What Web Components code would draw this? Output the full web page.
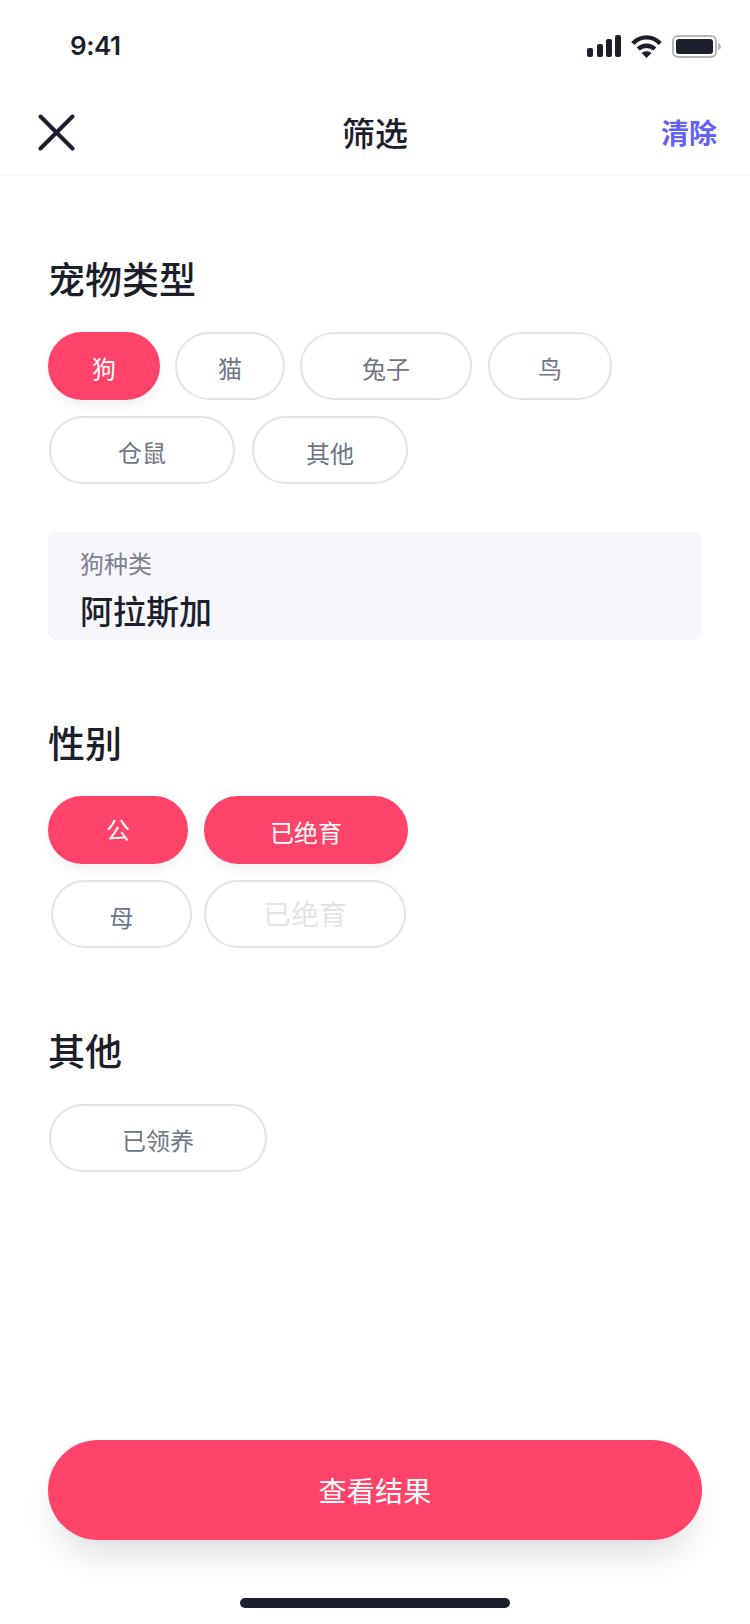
<!DOCTYPE html>
<html lang="zh">
<head>
<meta charset="utf-8">
<title>筛选</title>
<style>
  html, body { margin: 0; background: #fff; }
  body {
    width: 750px;
    height: 1624px;
    overflow: hidden;
    display: flex;
    flex-direction: column;
    font-family: "Noto Sans CJK SC", "Noto Sans", sans-serif;
    color: #1c1e2c;
  }
  filter-main { flex: 1; }
</style>
</head>
<body>
  <status-bar></status-bar>
  <nav-bar heading="筛选" action="清除"></nav-bar>

  <filter-main>
    <filter-section heading="宠物类型" top="77">
      <chip-row wrap>
        <filter-chip width="112" selected shift="3">狗</filter-chip>
        <filter-chip width="110" shift="3">猫</filter-chip>
        <filter-chip width="172" shift="3">兔子</filter-chip>
        <filter-chip width="124" shift="3" inset="1">鸟</filter-chip>
        <filter-chip width="186" shift="3" inset="1">仓鼠</filter-chip>
        <filter-chip width="156" shift="4" inset="2">其他</filter-chip>
      </chip-row>
      <field-box label="狗种类" value="阿拉斯加"></field-box>
    </filter-section>

    <filter-section heading="性别" top="77">
      <chip-row>
        <filter-chip width="140" selected shift="-4">公</filter-chip>
        <filter-chip width="204" selected shift="3">已绝育</filter-chip>
      </chip-row>
      <chip-row inset="3">
        <filter-chip width="141" shift="4">母</filter-chip>
        <filter-chip width="202" disabled shift="-2" inset="-4">已绝育</filter-chip>
      </chip-row>
    </filter-section>

    <filter-section heading="其他" top="77">
      <chip-row inset="1">
        <filter-chip width="218" shift="3">已领养</filter-chip>
      </chip-row>
    </filter-section>
  </filter-main>

  <primary-button>查看结果</primary-button>
  <home-indicator></home-indicator>

<script>
class StatusBar extends HTMLElement {
  constructor() {
    super();
    this.attachShadow({ mode: "open" });
    this.shadowRoot.innerHTML = `
      <style>
        :host {
          display: flex;
          align-items: center;
          justify-content: space-between;
          height: 90px;
          box-sizing: border-box;
          padding: 2px 29px 0 70px;
        }
        .time {
          font: 600 26px/1 Inter, "Liberation Sans", sans-serif;
          letter-spacing: -0.5px;
        }
        .icons { display: flex; align-items: center; gap: 10px; }
        svg { display: block; }
      </style>
      <span class="time">9:41</span>
      <div class="icons">
        <svg width="34" height="22" viewBox="0 0 34 22" fill="#1c1e2c">
          <rect x="0" y="13" width="6" height="9" rx="2"/>
          <rect x="10" y="9" width="6" height="13" rx="2"/>
          <rect x="19" y="4" width="6" height="18" rx="2"/>
          <rect x="28" y="0" width="6" height="22" rx="2"/>
        </svg>
        <svg width="31" height="23" viewBox="0 0 31 23" fill="none">
          <path d="M1.8 8.5C9.5 0.3 21.5 0.3 29.2 8.5" stroke="#1c1e2c" stroke-width="4.4"/>
          <path d="M7.2 14C12 9.6 19 9.6 23.8 14" stroke="#1c1e2c" stroke-width="4.4"/>
          <path d="M15.5 23L10.5 18C13.5 15.5 17.5 15.5 20.5 18Z" fill="#1c1e2c"/>
        </svg>
        <svg width="49" height="23" viewBox="0 0 49 23" fill="none">
          <rect x="1" y="1" width="43" height="21" rx="5" stroke="#b5b5b9" stroke-width="2"/>
          <rect x="4" y="4" width="37" height="15" rx="3" fill="#1c1e2c"/>
          <path d="M46 8C48 8.5 49 10 49 11.5C49 13 48 14.5 46 15Z" fill="#b5b5b9"/>
        </svg>
      </div>
    `;
  }
}

class NavBar extends HTMLElement {
  constructor() {
    super();
    this.attachShadow({ mode: "open" });
  }

  connectedCallback() {
    this.shadowRoot.innerHTML = `
      <style>
        :host {
          display: grid;
          grid-template-columns: 1fr auto 1fr;
          align-items: center;
          height: 86px;
          box-sizing: border-box;
          padding: 0 33px;
          border-bottom: 2px solid #f6f6fb;
        }
        svg { display: block; margin-left: 5px; }
        .title { font-size: 33px; line-height: 42px; font-weight: 500; }
        .action {
          justify-self: end;
          font-size: 28px;
          line-height: 42px;
          font-weight: 700;
          color: #6461f6;
        }
      </style>
      <svg width="37" height="37" viewBox="0 0 37 37" fill="none" stroke="#1c1e2c" stroke-width="4" stroke-linecap="round">
        <path d="M2.5 2.5L34.5 34.5M34.5 2.5L2.5 34.5"/>
      </svg>
      <span class="title">${this.getAttribute("heading")}</span>
      <span class="action">${this.getAttribute("action")}</span>
    `;
  }
}

class FilterMain extends HTMLElement {
  constructor() {
    super();
    this.attachShadow({ mode: "open" });
    this.shadowRoot.innerHTML = `
      <style>:host { display: block; padding: 0 48px; }</style>
      <slot></slot>
    `;
  }
}

class FilterSection extends HTMLElement {
  constructor() {
    super();
    this.attachShadow({ mode: "open" });
  }

  connectedCallback() {
    this.shadowRoot.innerHTML = `
      <style>
        :host { display: block; margin-top: ${this.getAttribute("top") ?? 0}px; }
        h2 {
          margin: 0 0 29px;
          font-size: 37px;
          line-height: 50px;
          font-weight: 500;
        }
      </style>
      <h2>${this.getAttribute("heading")}</h2>
      <slot></slot>
    `;
  }
}

class ChipRow extends HTMLElement {
  constructor() {
    super();
    this.attachShadow({ mode: "open" });
    this.shadowRoot.innerHTML = `
      <style>
        :host {
          display: flex;
          gap: 16px;
          margin-bottom: 16px;
        }
        :host([wrap]) { flex-wrap: wrap; column-gap: 15px; }
        :host(:last-of-type) { margin-bottom: 0; }
      </style>
      <slot></slot>
    `;
  }

  connectedCallback() {
    this.style.paddingLeft = `${this.getAttribute("inset") ?? 0}px`;
  }
}

class FilterChip extends HTMLElement {
  constructor() {
    super();
    this.attachShadow({ mode: "open" });
    this.shadowRoot.innerHTML = `
      <style>
        :host {
          display: flex;
          align-items: center;
          justify-content: center;
          box-sizing: border-box;
          height: 68px;
          border: 2px solid #e4e4e6;
          border-radius: 34px;
          font-size: 24px;
          color: #6f7587;
          background: #fff;
        }
        :host([selected]) {
          border-color: #ff4369;
          background: #ff4369;
          color: #fff;
          box-shadow: 0 6px 12px rgba(0, 0, 0, 0.05);
        }
        :host([disabled]) { font-size: 28px; color: #e4e4e6; }
      </style>
      <slot></slot>
    `;
  }

  connectedCallback() {
    this.style.width = `${this.getAttribute("width")}px`;
    const shift = Number(this.getAttribute("shift") ?? 0);
    if (shift > 0) this.style.paddingTop = `${shift}px`;
    if (shift < 0) this.style.paddingBottom = `${-shift}px`;
    if (this.hasAttribute("inset")) this.style.marginLeft = `${this.getAttribute("inset")}px`;
  }
}

class FieldBox extends HTMLElement {
  constructor() {
    super();
    this.attachShadow({ mode: "open" });
  }

  connectedCallback() {
    this.shadowRoot.innerHTML = `
      <style>
        :host {
          display: block;
          box-sizing: border-box;
          height: 108px;
          margin-top: 48px;
          padding: 13px 32px 0;
          border-radius: 8px;
          background: #f6f6fb;
        }
        .label { font-size: 24px; line-height: 36px; color: #7c8090; }
        .value { font-size: 33px; line-height: 46px; font-weight: 500; margin-top: 6px; }
      </style>
      <div class="label">${this.getAttribute("label")}</div>
      <div class="value">${this.getAttribute("value")}</div>
    `;
  }
}

class PrimaryButton extends HTMLElement {
  constructor() {
    super();
    this.attachShadow({ mode: "open" });
    this.shadowRoot.innerHTML = `
      <style>
        :host {
          display: flex;
          align-items: center;
          justify-content: center;
          height: 100px;
          margin: 0 48px 58px;
          border-radius: 50px;
          background: #ff4369;
          color: #fff;
          font-size: 28px;
          letter-spacing: 0.3px;
          box-shadow: 0 22px 36px -12px rgba(0, 0, 0, 0.16);
        }
      </style>
      <slot></slot>
    `;
  }
}

class HomeIndicator extends HTMLElement {
  constructor() {
    super();
    this.attachShadow({ mode: "open" });
    this.shadowRoot.innerHTML = `
      <style>
        :host {
          display: block;
          width: 270px;
          height: 10px;
          margin: 0 auto 16px;
          border-radius: 5px;
          background: #1c1e2c;
        }
      </style>
    `;
  }
}

customElements.define("status-bar", StatusBar);
customElements.define("nav-bar", NavBar);
customElements.define("filter-main", FilterMain);
customElements.define("filter-section", FilterSection);
customElements.define("chip-row", ChipRow);
customElements.define("filter-chip", FilterChip);
customElements.define("field-box", FieldBox);
customElements.define("primary-button", PrimaryButton);
customElements.define("home-indicator", HomeIndicator);
</script>
</body>
</html>
